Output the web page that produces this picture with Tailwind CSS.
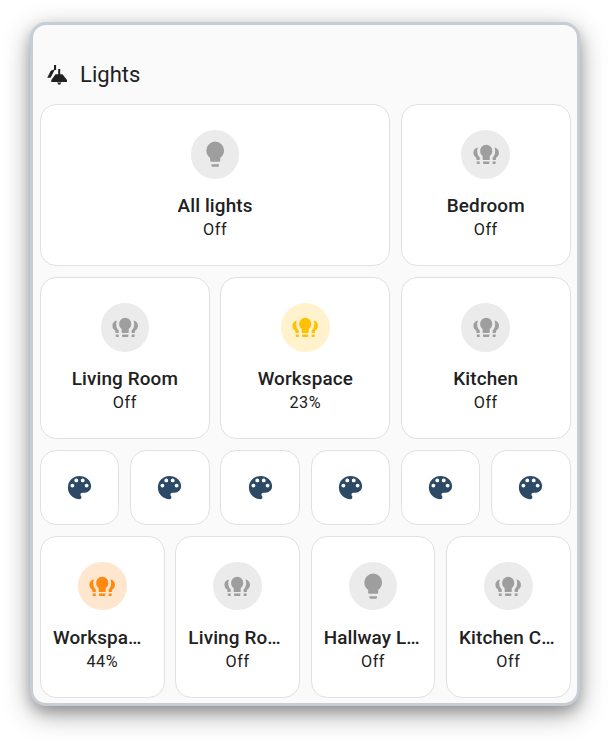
<!DOCTYPE html>
<html lang="en">
<head>
<meta charset="utf-8">
<title>Lights</title>
<script src="https://cdn.jsdelivr.net/npm/@tailwindcss/browser@4"></script>
</head>
<body class="bg-white font-[Roboto,sans-serif] text-[#212121]">
<svg class="hidden">
  <symbol id="bulb" viewBox="0 0 24 24"><path d="M12,2A7,7 0 0,0 5,9C5,11.38 6.19,13.47 8,14.74V17A1,1 0 0,0 9,18H15A1,1 0 0,0 16,17V14.74C17.81,13.47 19,11.38 19,9A7,7 0 0,0 12,2M9,21A1,1 0 0,0 10,22H14A1,1 0 0,0 15,21V20H9V21Z"/></symbol>
  <symbol id="group" viewBox="0 0 24 24"><path d="M12 4.6A4.8 4.8 0 0 0 7.2 9.4C7.2 11.2 8 12.5 9.2 13.4V15.9Q9.2 16.6 9.9 16.6H14.1Q14.8 16.6 14.8 15.900V13.4C16 12.5 16.800 11.2 16.8 9.400A4.8 4.8 0 0 0 12 4.6M9.5 17.700H14.500V19Q14.5 19.7 13.8 19.700H10.2Q9.5 19.700 9.5 19ZM5.500 6.800C3.400 7.100 1.900 8.700 1.900 10.8C1.900 12.5 2.800 13.800 4.200 14.900V16Q4.200 16.600 4.800 16.600H6.900V14.500C5.600 13.200 4.900 11.500 4.900 9.800C4.900 8.700 5.100 7.700 5.500 6.800M4.500 17.700H6.900V19.700H5.100Q4.500 19.700 4.500 19ZM18.500 6.800C20.600 7.100 22.100 8.700 22.100 10.800C22.100 12.500 21.200 13.800 19.800 14.900V16Q19.800 16.600 19.200 16.600H17.100V14.500C18.400 13.200 19.100 11.500 19.100 9.800C19.100 8.700 18.900 7.700 18.500 6.800M19.500 17.700H17.100V19.700H18.900Q19.500 19.700 19.500 19Z"/></symbol>
  <symbol id="palette" viewBox="0 0 24 24"><path d="M17.5,12A1.5,1.5 0 0,1 16,10.5A1.5,1.5 0 0,1 17.5,9A1.5,1.5 0 0,1 19,10.5A1.5,1.5 0 0,1 17.5,12M14.5,8A1.5,1.5 0 0,1 13,6.5A1.5,1.5 0 0,1 14.5,5A1.5,1.5 0 0,1 16,6.5A1.5,1.5 0 0,1 14.5,8M9.5,8A1.5,1.5 0 0,1 8,6.5A1.5,1.5 0 0,1 9.5,5A1.5,1.5 0 0,1 11,6.5A1.5,1.5 0 0,1 9.5,8M6.5,12A1.5,1.5 0 0,1 5,10.5A1.5,1.5 0 0,1 6.5,9A1.5,1.5 0 0,1 8,10.5A1.5,1.5 0 0,1 6.5,12M12,3A9,9 0 0,0 3,12A9,9 0 0,0 12,21A1.5,1.5 0 0,0 13.5,19.5C13.5,19.11 13.35,18.76 13.11,18.5C12.88,18.23 12.73,17.88 12.73,17.5A1.5,1.5 0 0,1 14.23,16H16A5,5 0 0,0 21,11C21,6.58 16.96,3 12,3Z"/></symbol>
</svg>
<div class="h-[744px] w-[610px] overflow-hidden pt-[22px] pl-[30px]">
  <main class="flex h-[684px] w-[550px] flex-col gap-[10.8px] rounded-[16px] border-3 border-[#c7cdd5] bg-[#fafafa] pt-[30px] pr-[6.4px] pl-[7px] shadow-[0_6px_12px_rgba(0,0,0,0.18),0_8px_27px_rgba(0,0,0,0.36)]">
    <header class="-mb-[1.8px] flex h-[40px] items-center pl-[6.6px]">
      <svg class="h-5 w-5 fill-[#212121]" viewBox="0 0 20 20"><path d="M7 -0.3H9.100V5H7.600L3.600 12.800H0.200L3.800 5.800L7 4.500Z"/><path d="M11.200 4H13.200V9.300H15.500L20 15V17H4.300V15L8.500 9.300H11.200Z"/><path d="M10.200 17.500H14.300L13.300 19.500H11.200Z"/></svg>
      <h1 class="ml-[13.5px] text-[22px] leading-[32px]">Lights</h1>
    </header>

    <div class="grid h-[162.2px] grid-cols-3 gap-[10.8px]">
      <section class="col-span-2 flex flex-col items-center rounded-[16.2px] border border-[#e0e0e0] bg-white px-3 pt-[25px]">
        <div class="flex size-[48.6px] items-center justify-center rounded-full bg-[#ebebeb]"><svg class="size-[30.4px] fill-[#9e9e9e]"><use href="#bulb"/></svg></div>
        <h2 class="mt-[13.5px] max-w-full truncate text-[18.9px] leading-[27px] font-medium tracking-[0.135px]">All lights</h2>
        <p class="text-[16.2px] leading-[21.6px] tracking-[0.54px]">Off</p>
      </section>
      <section class="flex flex-col items-center rounded-[16.2px] border border-[#e0e0e0] bg-white px-3 pt-[25px]">
        <div class="flex size-[48.6px] items-center justify-center rounded-full bg-[#ebebeb]"><svg class="size-[30.4px] fill-[#9e9e9e]"><use href="#group"/></svg></div>
        <h2 class="mt-[13.5px] max-w-full truncate text-[18.9px] leading-[27px] font-medium tracking-[0.135px]">Bedroom</h2>
        <p class="text-[16.2px] leading-[21.6px] tracking-[0.54px]">Off</p>
      </section>
    </div>

    <div class="grid h-[162.2px] grid-cols-3 gap-[10.8px]">
      <section class="flex flex-col items-center rounded-[16.2px] border border-[#e0e0e0] bg-white px-3 pt-[25px]">
        <div class="flex size-[48.6px] items-center justify-center rounded-full bg-[#ebebeb]"><svg class="size-[30.4px] fill-[#9e9e9e]"><use href="#group"/></svg></div>
        <h2 class="mt-[13.5px] max-w-full truncate text-[18.9px] leading-[27px] font-medium tracking-[0.135px]">Living Room</h2>
        <p class="text-[16.2px] leading-[21.6px] tracking-[0.54px]">Off</p>
      </section>
      <section class="flex flex-col items-center rounded-[16.2px] border border-[#e0e0e0] bg-white px-3 pt-[25px]">
        <div class="flex size-[48.6px] items-center justify-center rounded-full bg-[#fff2cd]"><svg class="size-[30.4px] fill-[#ffc107]"><use href="#group"/></svg></div>
        <h2 class="mt-[13.5px] max-w-full truncate text-[18.9px] leading-[27px] font-medium tracking-[0.135px]">Workspace</h2>
        <p class="text-[16.2px] leading-[21.6px] tracking-[0.54px]">23%</p>
      </section>
      <section class="flex flex-col items-center rounded-[16.2px] border border-[#e0e0e0] bg-white px-3 pt-[25px]">
        <div class="flex size-[48.6px] items-center justify-center rounded-full bg-[#ebebeb]"><svg class="size-[30.4px] fill-[#9e9e9e]"><use href="#group"/></svg></div>
        <h2 class="mt-[13.5px] max-w-full truncate text-[18.9px] leading-[27px] font-medium tracking-[0.135px]">Kitchen</h2>
        <p class="text-[16.2px] leading-[21.6px] tracking-[0.54px]">Off</p>
      </section>
    </div>

    <div class="grid h-[75px] grid-cols-6 gap-[10.8px] fill-[#2c4a66]">
      <button class="flex items-center justify-center rounded-[16.2px] border border-[#e0e0e0] bg-white"><svg class="size-[31px]"><use href="#palette"/></svg></button>
      <button class="flex items-center justify-center rounded-[16.2px] border border-[#e0e0e0] bg-white"><svg class="size-[31px]"><use href="#palette"/></svg></button>
      <button class="flex items-center justify-center rounded-[16.2px] border border-[#e0e0e0] bg-white"><svg class="size-[31px]"><use href="#palette"/></svg></button>
      <button class="flex items-center justify-center rounded-[16.2px] border border-[#e0e0e0] bg-white"><svg class="size-[31px]"><use href="#palette"/></svg></button>
      <button class="flex items-center justify-center rounded-[16.2px] border border-[#e0e0e0] bg-white"><svg class="size-[31px]"><use href="#palette"/></svg></button>
      <button class="flex items-center justify-center rounded-[16.2px] border border-[#e0e0e0] bg-white"><svg class="size-[31px]"><use href="#palette"/></svg></button>
    </div>

    <div class="grid h-[162.2px] grid-cols-4 gap-[10.8px]">
      <section class="flex min-w-0 flex-col items-center rounded-[16.2px] border border-[#e0e0e0] bg-white px-3 pt-[25px]">
        <div class="flex size-[48.6px] items-center justify-center rounded-full bg-[#ffe6cf]"><svg class="size-[30.4px] fill-[#ff890e]"><use href="#group"/></svg></div>
        <h2 class="mt-[13.5px] w-full text-left whitespace-nowrap text-[18.9px] leading-[27px] font-medium tracking-[0.135px]">Workspa…</h2>
        <p class="text-[16.2px] leading-[21.6px] tracking-[0.54px]">44%</p>
      </section>
      <section class="flex min-w-0 flex-col items-center rounded-[16.2px] border border-[#e0e0e0] bg-white px-3 pt-[25px]">
        <div class="flex size-[48.6px] items-center justify-center rounded-full bg-[#ebebeb]"><svg class="size-[30.4px] fill-[#9e9e9e]"><use href="#group"/></svg></div>
        <h2 class="mt-[13.5px] w-full text-left whitespace-nowrap text-[18.9px] leading-[27px] font-medium tracking-[0.135px]">Living Ro…</h2>
        <p class="text-[16.2px] leading-[21.6px] tracking-[0.54px]">Off</p>
      </section>
      <section class="flex min-w-0 flex-col items-center rounded-[16.2px] border border-[#e0e0e0] bg-white px-3 pt-[25px]">
        <div class="flex size-[48.6px] items-center justify-center rounded-full bg-[#ebebeb]"><svg class="size-[30.4px] fill-[#9e9e9e]"><use href="#bulb"/></svg></div>
        <h2 class="mt-[13.5px] w-full text-left whitespace-nowrap text-[18.9px] leading-[27px] font-medium tracking-[0.135px]">Hallway L…</h2>
        <p class="text-[16.2px] leading-[21.6px] tracking-[0.54px]">Off</p>
      </section>
      <section class="flex min-w-0 flex-col items-center rounded-[16.2px] border border-[#e0e0e0] bg-white px-3 pt-[25px]">
        <div class="flex size-[48.6px] items-center justify-center rounded-full bg-[#ebebeb]"><svg class="size-[30.4px] fill-[#9e9e9e]"><use href="#group"/></svg></div>
        <h2 class="mt-[13.5px] w-full text-left whitespace-nowrap text-[18.9px] leading-[27px] font-medium tracking-[0.135px]">Kitchen C…</h2>
        <p class="text-[16.2px] leading-[21.6px] tracking-[0.54px]">Off</p>
      </section>
    </div>
  </main>
</div>
</body>
</html>
